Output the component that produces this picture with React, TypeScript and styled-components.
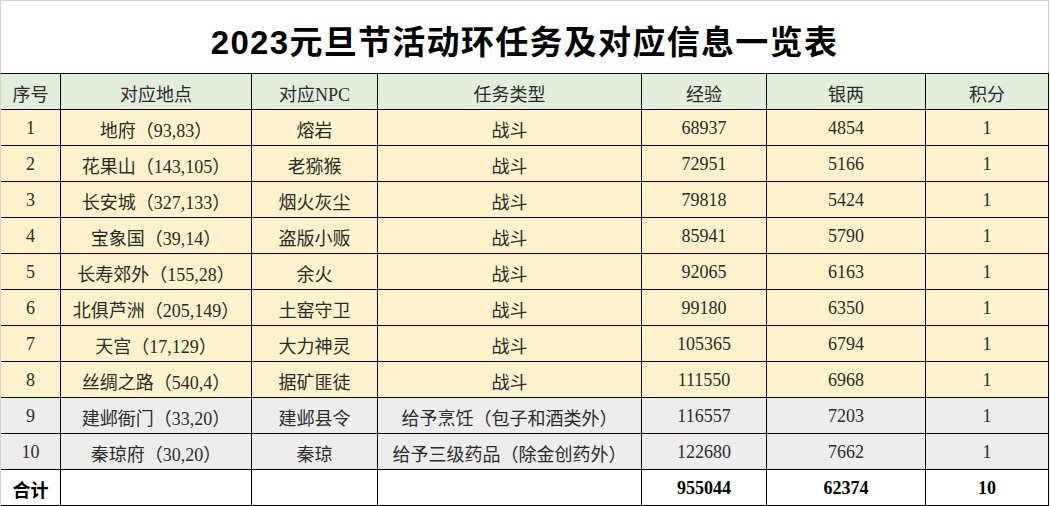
import React from 'react'
import styled, { createGlobalStyle } from 'styled-components'

const GlobalStyle = createGlobalStyle`
  html, body {
    margin: 0;
    padding: 0;
    background: #ffffff;
  }
`

type Tone = 'head' | 'fight' | 'give' | 'total'

const toneColor: Record<Tone, string> = {
  head: '#e2efda',
  fight: '#fff2cc',
  give: '#ededed',
  total: '#ffffff',
}

const Sheet = styled.div`
  width: 1049px;
  height: 506px;
  overflow: hidden;
  font-family: 'Liberation Serif', 'Noto Sans CJK SC', serif;
  color: #2b2b2b;
`

const Title = styled.div`
  box-sizing: border-box;
  height: 73px;
  border: 1px solid #d4d4d4;
  border-bottom: 0;
  display: flex;
  align-items: center;
  justify-content: center;
  padding-top: 5px;
  font-family: 'Liberation Sans', 'Noto Sans CJK SC', sans-serif;
  font-weight: 700;
  font-size: 33px;
  letter-spacing: 1.3px;
  color: #000000;
`

const Table = styled.div`
  display: grid;
  grid-template-columns: 60px 191px 126px 264px 125px 159px 123px;
  grid-auto-rows: 36px;
  border-top: 1px solid #000000;
  border-left: 1px solid #d4d4d4;
`

const Cell = styled.div<{ $tone: Tone; $bold?: boolean }>`
  box-sizing: border-box;
  display: flex;
  align-items: center;
  justify-content: center;
  padding-top: 2px;
  white-space: nowrap;
  border-right: 1px solid #000000;
  border-bottom: 1px solid #000000;
  background: ${(p) => toneColor[p.$tone]};
  font-size: 18px;
  font-weight: ${(p) => (p.$bold ? 700 : 400)};
  color: ${(p) => (p.$bold ? '#000000' : '#2b2b2b')};
`

const headers = ['序号', '对应地点', '对应NPC', '任务类型', '经验', '银两', '积分']

const rows: { place: string; npc: string; task: string; exp: number; silver: number; score: number }[] = [
  { place: '地府（93,83）', npc: '熔岩', task: '战斗', exp: 68937, silver: 4854, score: 1 },
  { place: '花果山（143,105）', npc: '老猕猴', task: '战斗', exp: 72951, silver: 5166, score: 1 },
  { place: '长安城（327,133）', npc: '烟火灰尘', task: '战斗', exp: 79818, silver: 5424, score: 1 },
  { place: '宝象国（39,14）', npc: '盗版小贩', task: '战斗', exp: 85941, silver: 5790, score: 1 },
  { place: '长寿郊外（155,28）', npc: '余火', task: '战斗', exp: 92065, silver: 6163, score: 1 },
  { place: '北俱芦洲（205,149）', npc: '土窑守卫', task: '战斗', exp: 99180, silver: 6350, score: 1 },
  { place: '天宫（17,129）', npc: '大力神灵', task: '战斗', exp: 105365, silver: 6794, score: 1 },
  { place: '丝绸之路（540,4）', npc: '据矿匪徒', task: '战斗', exp: 111550, silver: 6968, score: 1 },
  { place: '建邺衙门（33,20）', npc: '建邺县令', task: '给予烹饪（包子和酒类外）', exp: 116557, silver: 7203, score: 1 },
  { place: '秦琼府（30,20）', npc: '秦琼', task: '给予三级药品（除金创药外）', exp: 122680, silver: 7662, score: 1 },
]

const sum = (k: 'exp' | 'silver' | 'score') => rows.reduce((a, r) => a + r[k], 0)

export default function App() {
  return (
    <>
      <GlobalStyle />
      <Sheet>
        <Title>2023元旦节活动环任务及对应信息一览表</Title>
        <Table>
          {headers.map((h) => (
            <Cell key={h} $tone="head">{h}</Cell>
          ))}
          {rows.map((r, i) => {
            const tone: Tone = r.task === '战斗' ? 'fight' : 'give'
            return (
              <React.Fragment key={i}>
                <Cell $tone={tone}>{i + 1}</Cell>
                <Cell $tone={tone}>{r.place}</Cell>
                <Cell $tone={tone}>{r.npc}</Cell>
                <Cell $tone={tone}>{r.task}</Cell>
                <Cell $tone={tone}>{r.exp}</Cell>
                <Cell $tone={tone}>{r.silver}</Cell>
                <Cell $tone={tone}>{r.score}</Cell>
              </React.Fragment>
            )
          })}
          <Cell $tone="total" $bold>合计</Cell>
          <Cell $tone="total" />
          <Cell $tone="total" />
          <Cell $tone="total" />
          <Cell $tone="total" $bold>{sum('exp')}</Cell>
          <Cell $tone="total" $bold>{sum('silver')}</Cell>
          <Cell $tone="total" $bold>{sum('score')}</Cell>
        </Table>
      </Sheet>
    </>
  )
}
